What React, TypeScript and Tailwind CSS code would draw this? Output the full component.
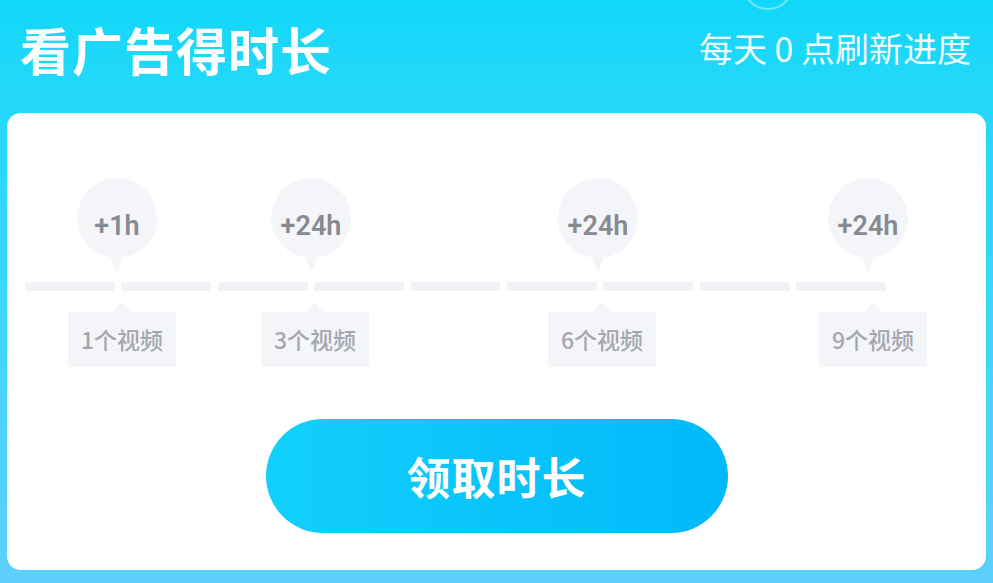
const cjk = { fontFamily: '"Noto Sans CJK SC", "Noto Sans", sans-serif' };
const num = { fontFamily: 'Roboto, "Noto Sans CJK SC", sans-serif' };

const milestones = [
  { reward: '+1h', label: '1个视频', x: 92, lx: 97 },
  { reward: '+24h', label: '3个视频', x: 286, lx: 290 },
  { reward: '+24h', label: '6个视频', x: 573, lx: 577 },
  { reward: '+24h', label: '9个视频', x: 843, lx: 848 },
];

export default function App() {
  return (
    <div
      className="relative w-[993px] h-[583px] overflow-hidden bg-gradient-to-b from-[#10d8f9] via-[#3ad6fb] to-[#5dd0fc]"
      style={cjk}
    >
      {/* faint ring peeking from the top */}
      <div className="absolute left-[742px] top-[-42px] w-[52px] h-[52px] rounded-full border-[2px] border-white/40" />

      <header className="flex h-[113px] items-center justify-between pl-[20px] pr-[22px] pb-[14px]">
        <h1 className="text-[51px] font-bold leading-none tracking-[1px] text-white">看广告得时长</h1>
        <span className="mb-[4px] text-[34px] leading-none text-white/95">每天 0 点刷新进度</span>
      </header>

      <section className="mx-[7px] h-[457px] rounded-[14px] bg-white pt-[65px]">
        <div className="relative ml-[18px] w-[861px]">
          {/* reward bubbles */}
          <div className="relative h-[104px]">
            {milestones.map((m, i) => (
              <div key={i} className="absolute top-0 flex flex-col items-center" style={{ left: m.x - 40 }}>
                <div
                  className="flex h-[80px] w-[80px] items-center justify-center rounded-full bg-[#f4f5f8] text-[27px] font-semibold text-[#878a91]"
                  style={num}
                >
                  <span className="mt-[16px]">{m.reward}</span>
                </div>
                <div className="h-0 w-0 border-x-[6px] border-t-[14px] border-x-transparent border-t-[#f4f5f8]" />
              </div>
            ))}
          </div>

          {/* progress track */}
          <div className="flex h-[9px] gap-[6.4px]">
            {Array.from({ length: 9 }).map((_, i) => (
              <div key={i} className="flex-1 rounded-[2px] bg-[#f1f2f6]" />
            ))}
          </div>

          {/* video count labels */}
          <div className="relative h-[76px]">
            {milestones.map((m, i) => (
              <div key={i} className="absolute top-[11px] flex flex-col items-center" style={{ left: m.lx - 54 }}>
                <div className="h-0 w-0 border-x-[9px] border-b-[10px] border-x-transparent border-b-[#f4f5f8]" />
                <div className="flex h-[55px] w-[108px] items-center justify-center rounded-[3px] bg-[#f4f5f8] text-[23px] font-medium text-[#a4a7af]">
                  {m.label}
                </div>
              </div>
            ))}
          </div>
        </div>

        <button className="mx-auto mt-[52px] flex h-[114px] w-[462px] items-center justify-center rounded-full bg-gradient-to-r from-[#12d0fb] to-[#02b8fb] text-[44px] font-bold tracking-[1px] text-white">
          领取时长
        </button>
      </section>
    </div>
  );
}
